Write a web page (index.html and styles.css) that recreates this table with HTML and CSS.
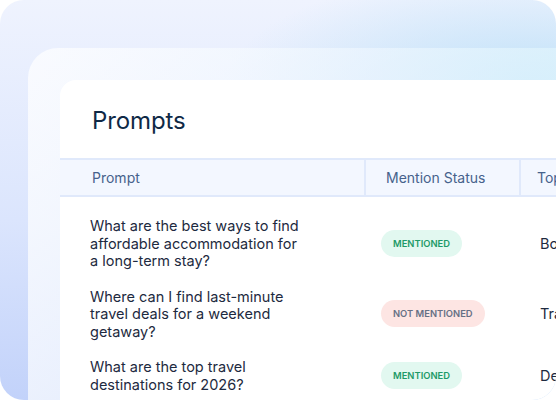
FILE: index.html
```html
<!DOCTYPE html>
<html lang="en">
<head>
<meta charset="utf-8">
<link rel="stylesheet" href="styles.css">
</head>
<body>
<div class="outer">
  <div class="middle">
    <div class="card">
      <h1 class="title">Prompts</h1>
      <div class="thead">
        <div class="th th-prompt">Prompt</div>
        <div class="th th-status">Mention Status</div>
        <div class="th th-topic">Top</div>
      </div>
      <div class="tbody">
        <div class="row">
          <div class="cell prompt">What are the best ways to find affordable accommodation for a long-term stay?</div>
          <div class="cell status"><span class="badge yes">MENTIONED</span></div>
          <div class="cell topic">Bo</div>
        </div>
        <div class="row">
          <div class="cell prompt">Where can I find last-minute travel deals for a weekend getaway?</div>
          <div class="cell status"><span class="badge no">NOT MENTIONED</span></div>
          <div class="cell topic">Tra</div>
        </div>
        <div class="row">
          <div class="cell prompt">What are the top travel destinations for 2026?</div>
          <div class="cell status"><span class="badge yes">MENTIONED</span></div>
          <div class="cell topic">De</div>
        </div>
      </div>
    </div>
  </div>
</div>
</body>
</html>
```
FILE: styles.css
```css
html, body {
  margin: 0;
  padding: 0;
  background: #ffffff;
}
body {
  width: 556px;
  height: 400px;
  overflow: hidden;
  font-family: "Inter", "DejaVu Sans", sans-serif;
}
.outer {
  width: 556px;
  height: 400px;
  box-sizing: border-box;
  padding: 48px 0 0 28px;
  border-radius: 24px;
  overflow: hidden;
  background:
    radial-gradient(ellipse 300px 110px at 95% 20%, rgba(192, 226, 248, 0.95) 0%, rgba(192, 226, 248, 0) 100%),
    linear-gradient(180deg, #eff3fe 0%, #dbe5fd 55%, #c2d2fa 100%);
}
.middle {
  width: 620px;
  height: 420px;
  box-sizing: border-box;
  padding: 32px 0 0 32px;
  border-radius: 30px 0 0 0;
  background: linear-gradient(100deg, rgba(255, 255, 255, 0.72) 0%, rgba(240, 248, 255, 0.6) 50%, rgba(214, 243, 251, 0.75) 100%);
}
.card {
  width: 620px;
  height: 400px;
  background: #ffffff;
  border-radius: 16px 0 0 0;
}
.title {
  margin: 0;
  padding: 26px 0 22px 32px;
  font-size: 24px;
  line-height: 30px;
  font-weight: 400;
  color: #0f2946;
  letter-spacing: -0.1px;
}
.thead {
  display: grid;
  grid-template-columns: 304px 155px 1fr;
  background: #f3f7ff;
  border-top: 2px solid #e0e9fb;
  border-bottom: 2px solid #e0e9fb;
  height: 35px;
}
.th {
  font-size: 14px;
  line-height: 35px;
  color: #46628c;
}
.th-prompt { padding-left: 32px; }
.th-status { border-left: 2px solid #e0e9fb; padding-left: 20px; }
.th-topic { border-left: 2px solid #e0e9fb; padding-left: 16px; }
.tbody {
  padding-top: 11px;
}
.row {
  display: grid;
  grid-template-columns: 306px 157px 1fr;
  align-items: center;
  padding: 9px 0;
}
.cell.prompt {
  padding-left: 30px;
  width: 214px;
  font-size: 14.5px;
  line-height: 17.5px;
  color: #1d2a40;
}
.cell.status {
  padding-left: 15px;
}
.cell.topic {
  padding-left: 17px;
  font-size: 14.5px;
  color: #1d2a40;
}
.badge {
  display: inline-block;
  height: 27px;
  line-height: 27px;
  padding: 0 12px;
  border-radius: 14px;
  font-size: 9.4px;
  font-weight: 600;
  letter-spacing: 0;
}
.badge.yes {
  background: #e2f8f0;
  color: #1e9a68;
}
.badge.no {
  background: #fde5e3;
  color: #667085;
}
```
